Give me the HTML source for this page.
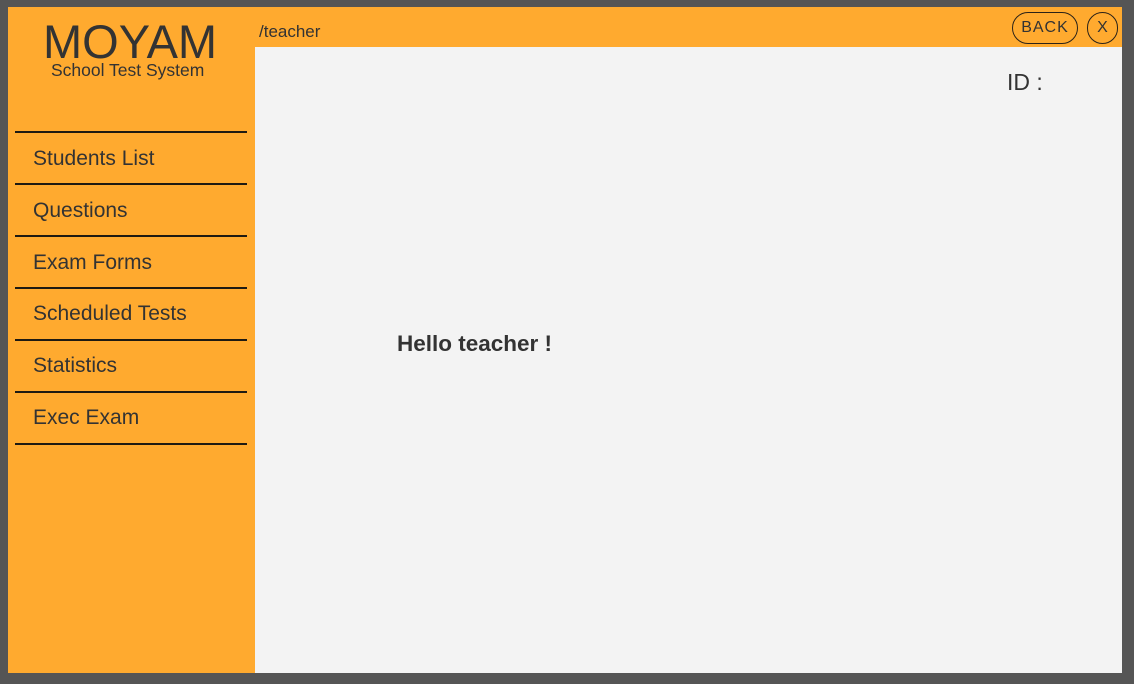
<!DOCTYPE html>
<html><head><style>
body{margin:0;width:1134px;height:684px;background:#555;position:relative;overflow:hidden;font-family:"Liberation Sans",sans-serif;color:#333}
.frame{position:absolute;left:8px;top:7px;width:1114px;height:666px;background:#ffaa2f}
.main{position:absolute;left:255px;top:47px;width:867px;height:626px;background:#f3f3f3}
.abs{position:absolute;white-space:nowrap}
.line{position:absolute;left:15px;width:232px;height:2px;background:#1e1a12}
.item{position:absolute;left:33px;font-size:21px;line-height:24px}
.btn{position:absolute;border:1.5px solid #2a2218;border-radius:16px;font-size:16px;text-align:center;box-sizing:border-box;color:#333;letter-spacing:1px}
</style></head><body>
<div class="frame"></div>
<div class="main"></div>
<div class="abs" style="left:43px;top:17px;font-size:47px;line-height:50px">MOYAM</div>
<div class="abs" style="left:51px;top:61px;font-size:17.5px;line-height:18px">School Test System</div>
<div class="abs" style="left:259px;top:23px;font-size:17px;line-height:18px">/teacher</div>
<div class="btn" style="left:1012px;top:12px;width:66px;height:32px;line-height:29px">BACK</div>
<div class="btn" style="left:1087px;top:12px;width:31px;height:32px;line-height:29px;letter-spacing:0">X</div>
<div class="abs" style="left:1007px;top:69px;font-size:23px;line-height:26px">ID :</div>
<div class="abs" style="left:397px;top:331px;font-size:22.5px;line-height:26px;font-weight:bold">Hello teacher !</div>
<div class="line" style="top:131px"></div>
<div class="item" style="top:147px">Students List</div>
<div class="line" style="top:183px"></div>
<div class="item" style="top:199px">Questions</div>
<div class="line" style="top:235px"></div>
<div class="item" style="top:251px">Exam Forms</div>
<div class="line" style="top:287px"></div>
<div class="item" style="top:302px">Scheduled Tests</div>
<div class="line" style="top:339px"></div>
<div class="item" style="top:354px">Statistics</div>
<div class="line" style="top:391px"></div>
<div class="item" style="top:406px">Exec Exam</div>
<div class="line" style="top:443px"></div>
</body></html>
